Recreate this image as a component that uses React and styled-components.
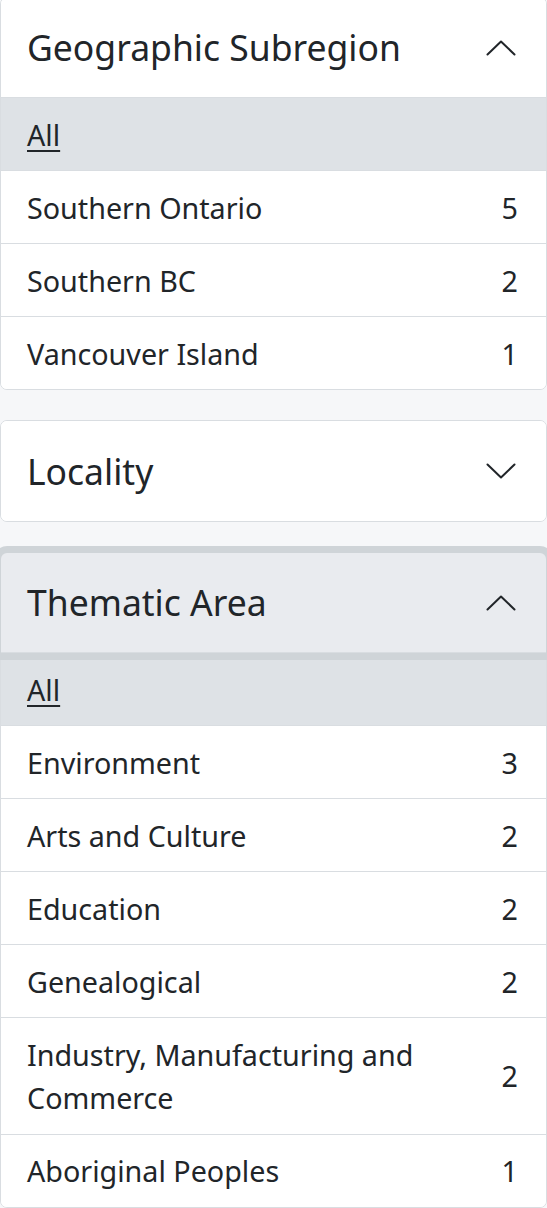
import React from "react";
import styled, { createGlobalStyle } from "styled-components";

const Global = createGlobalStyle`
  html, body { margin: 0; padding: 0; background: #f6f7f9; }
  body { font-family: "Noto Sans", "Open Sans", sans-serif; color: #212529; }
  * { box-sizing: border-box; }
`;

const Stack = styled.div`
  display: flex;
  flex-direction: column;
  gap: 30px;
  margin-top: -3px;
`;

const Card = styled.section`
  background: #fff;
  border: 1px solid #d9dde1;
  border-radius: 7px;
`;

const Header = styled.div`
  position: relative;
  z-index: 1;
  height: 100px;
  display: flex;
  align-items: center;
  justify-content: space-between;
  padding: 0 30px 0 26px;
  background: ${(p) => (p.$focused ? "#e9ebef" : "#fff")};
  border-radius: ${(p) => (p.$open ? "6px 6px 0 0" : "6px")};
  border-bottom: ${(p) => (p.$open ? "1px solid #d9dde1" : "none")};
  box-shadow: ${(p) => (p.$focused ? "0 0 0 7px #cfd4d8" : "none")};
`;

const Title = styled.h2`
  margin: 0;
  font-size: 35.5px;
  font-weight: 400;
  line-height: 1.2;
  color: #212529;
`;

const Row = styled.div`
  display: flex;
  justify-content: space-between;
  align-items: center;
  gap: 24px;
  padding: 14.5px 28px 14.5px 26px;
  font-size: 28.7px;
  line-height: 1.5;
  background: ${(p) => (p.$active ? "#dee2e6" : "#fff")};
  border-bottom: 1px solid #d9dde1;
  &:last-child {
    border-bottom: none;
    border-radius: 0 0 6px 6px;
  }
`;

const AllLink = styled.a`
  color: #212529;
  text-decoration: underline;
  text-underline-offset: 4px;
  text-decoration-thickness: 2px;
`;

const Label = styled.span`
  max-width: 410px;
`;

const Count = styled.span`
  flex-shrink: 0;
`;

const Chevron = ({ up }) => (
  <svg width="30" height="16" viewBox="0 0 30 16" fill="none">
    <path
      d={up ? "M1.5 14.5 L15 1.5 L28.5 14.5" : "M1.5 1.5 L15 14.5 L28.5 1.5"}
      stroke="#212529"
      strokeWidth="2"
      strokeLinecap="round"
      strokeLinejoin="round"
    />
  </svg>
);

const Facet = ({ title, open, focused, items }) => (
  <Card>
    <Header $open={open} $focused={focused}>
      <Title>{title}</Title>
      <Chevron up={open} />
    </Header>
    {open && (
      <>
        <Row $active>
          <AllLink href="#">All</AllLink>
        </Row>
        {items.map(([label, n]) => (
          <Row key={label}>
            <Label>{label}</Label>
            <Count>{n}</Count>
          </Row>
        ))}
      </>
    )}
  </Card>
);

export default function App() {
  return (
    <>
      <Global />
      <Stack>
        <Facet
          title="Geographic Subregion"
          open
          items={[
            ["Southern Ontario", 5],
            ["Southern BC", 2],
            ["Vancouver Island", 1],
          ]}
        />
        <Facet title="Locality" items={[]} />
        <Facet
          title="Thematic Area"
          open
          focused
          items={[
            ["Environment", 3],
            ["Arts and Culture", 2],
            ["Education", 2],
            ["Genealogical", 2],
            ["Industry, Manufacturing and Commerce", 2],
            ["Aboriginal Peoples", 1],
          ]}
        />
      </Stack>
    </>
  );
}
